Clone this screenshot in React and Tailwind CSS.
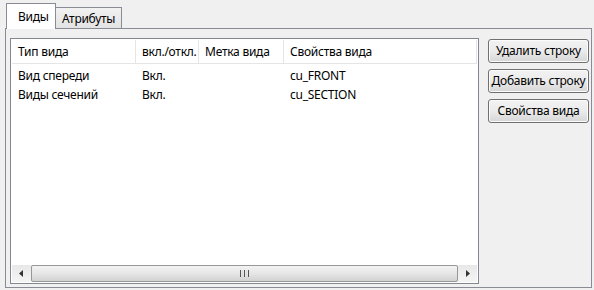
import React from "react";

const font = { fontFamily: '"Noto Sans", "Open Sans", sans-serif', letterSpacing: "-0.25px" };

function Btn({ children }) {
  return (
    <div className="h-[24px] w-[101px] rounded-[3px] border border-[#707070] bg-gradient-to-b from-[#f2f2f2] via-[#ebebeb] to-[#d6d6d6] shadow-[inset_0_0_0_1px_#fcfcfc] flex items-center justify-center text-[12px] text-black leading-none whitespace-nowrap">
      {children}
    </div>
  );
}

export default function App() {
  const cols = [
    { w: 124, label: "Тип вида" },
    { w: 63, label: "вкл./откл." },
    { w: 85, label: "Метка вида" },
    { w: 193, label: "Свойства вида" },
  ];
  const rows = [
    ["Вид спереди", "Вкл.", "", "cu_FRONT"],
    ["Виды сечений", "Вкл.", "", "cu_SECTION"],
  ];
  return (
    <div className="w-[594px] h-[290px] bg-[#f0f0f0] pt-[3px] pl-[5px] text-black" style={font}>
      {/* tabs */}
      <div className="flex items-end h-[25px] pl-[1px]">
        <div className="relative z-10 h-[26px] w-[50px] -mb-[1px] bg-white border border-[#898c95] border-b-0 flex items-start pt-[4px] pl-[11px] text-[12px]">
          Виды
        </div>
        <div className="h-[21px] w-[67px] -ml-[1px] bg-gradient-to-b from-[#f2f2f2] to-[#e3e3e3] border border-[#898c95] border-b-0 flex items-start pt-[2px] pl-[6px] text-[12px]">
          Атрибуты
        </div>
      </div>
      {/* panel */}
      <div className="w-[587px] h-[260px] border border-[#898c95] bg-[#f0f0f0] flex pl-[4px] pt-[9px]">
        {/* list */}
        <div className="w-[469px] h-[246px] border border-[#828790] bg-white flex flex-col p-[1px]">
          <div className="h-[24px] flex border-b border-[#e5e5e5] text-[12px]">
            {cols.map((c, i) => (
              <div
                key={i}
                className="h-full flex items-center pl-[6px] border-r border-[#e5e5e5] whitespace-nowrap overflow-hidden"
                style={{ width: c.w }}
              >
                {c.label}
              </div>
            ))}
          </div>
          <div className="flex-1 pt-[2px] text-[12px]">
            {rows.map((r, ri) => (
              <div key={ri} className="h-[19px] flex items-center">
                {r.map((v, ci) => (
                  <div key={ci} className="pl-[6px] whitespace-nowrap" style={{ width: cols[ci].w }}>
                    {v}
                  </div>
                ))}
              </div>
            ))}
          </div>
          {/* scrollbar */}
          <div className="h-[17px] flex bg-gradient-to-b from-[#e8e8e8] to-[#f4f4f4]">
            <div className="w-[19px] flex items-center justify-center">
              <svg width="5" height="7" viewBox="0 0 5 7">
                <path d="M4 0 L0 3.5 L4 7 Z" fill="#333" />
              </svg>
            </div>
            <div className="flex-1 rounded-[2px] border border-[#979797] bg-gradient-to-b from-[#f3f3f3] via-[#e6e6e6] to-[#d2d2d2] flex items-center justify-center">
              <div className="flex gap-[1px]">
                <div className="w-[1px] h-[7px] bg-[#555]" />
                <div className="w-[1px] h-[7px] bg-[#ddd]" />
                <div className="w-[1px] h-[7px] bg-[#555]" />
                <div className="w-[1px] h-[7px] bg-[#ddd]" />
                <div className="w-[1px] h-[7px] bg-[#555]" />
              </div>
            </div>
            <div className="w-[19px] flex items-center justify-center">
              <svg width="5" height="7" viewBox="0 0 5 7">
                <path d="M1 0 L5 3.5 L1 7 Z" fill="#333" />
              </svg>
            </div>
          </div>
        </div>
        {/* buttons */}
        <div className="ml-[9px] flex flex-col gap-[6px] pt-[1px]">
          <Btn>Удалить строку</Btn>
          <Btn>Добавить строку</Btn>
          <Btn>Свойства вида</Btn>
        </div>
      </div>
    </div>
  );
}
